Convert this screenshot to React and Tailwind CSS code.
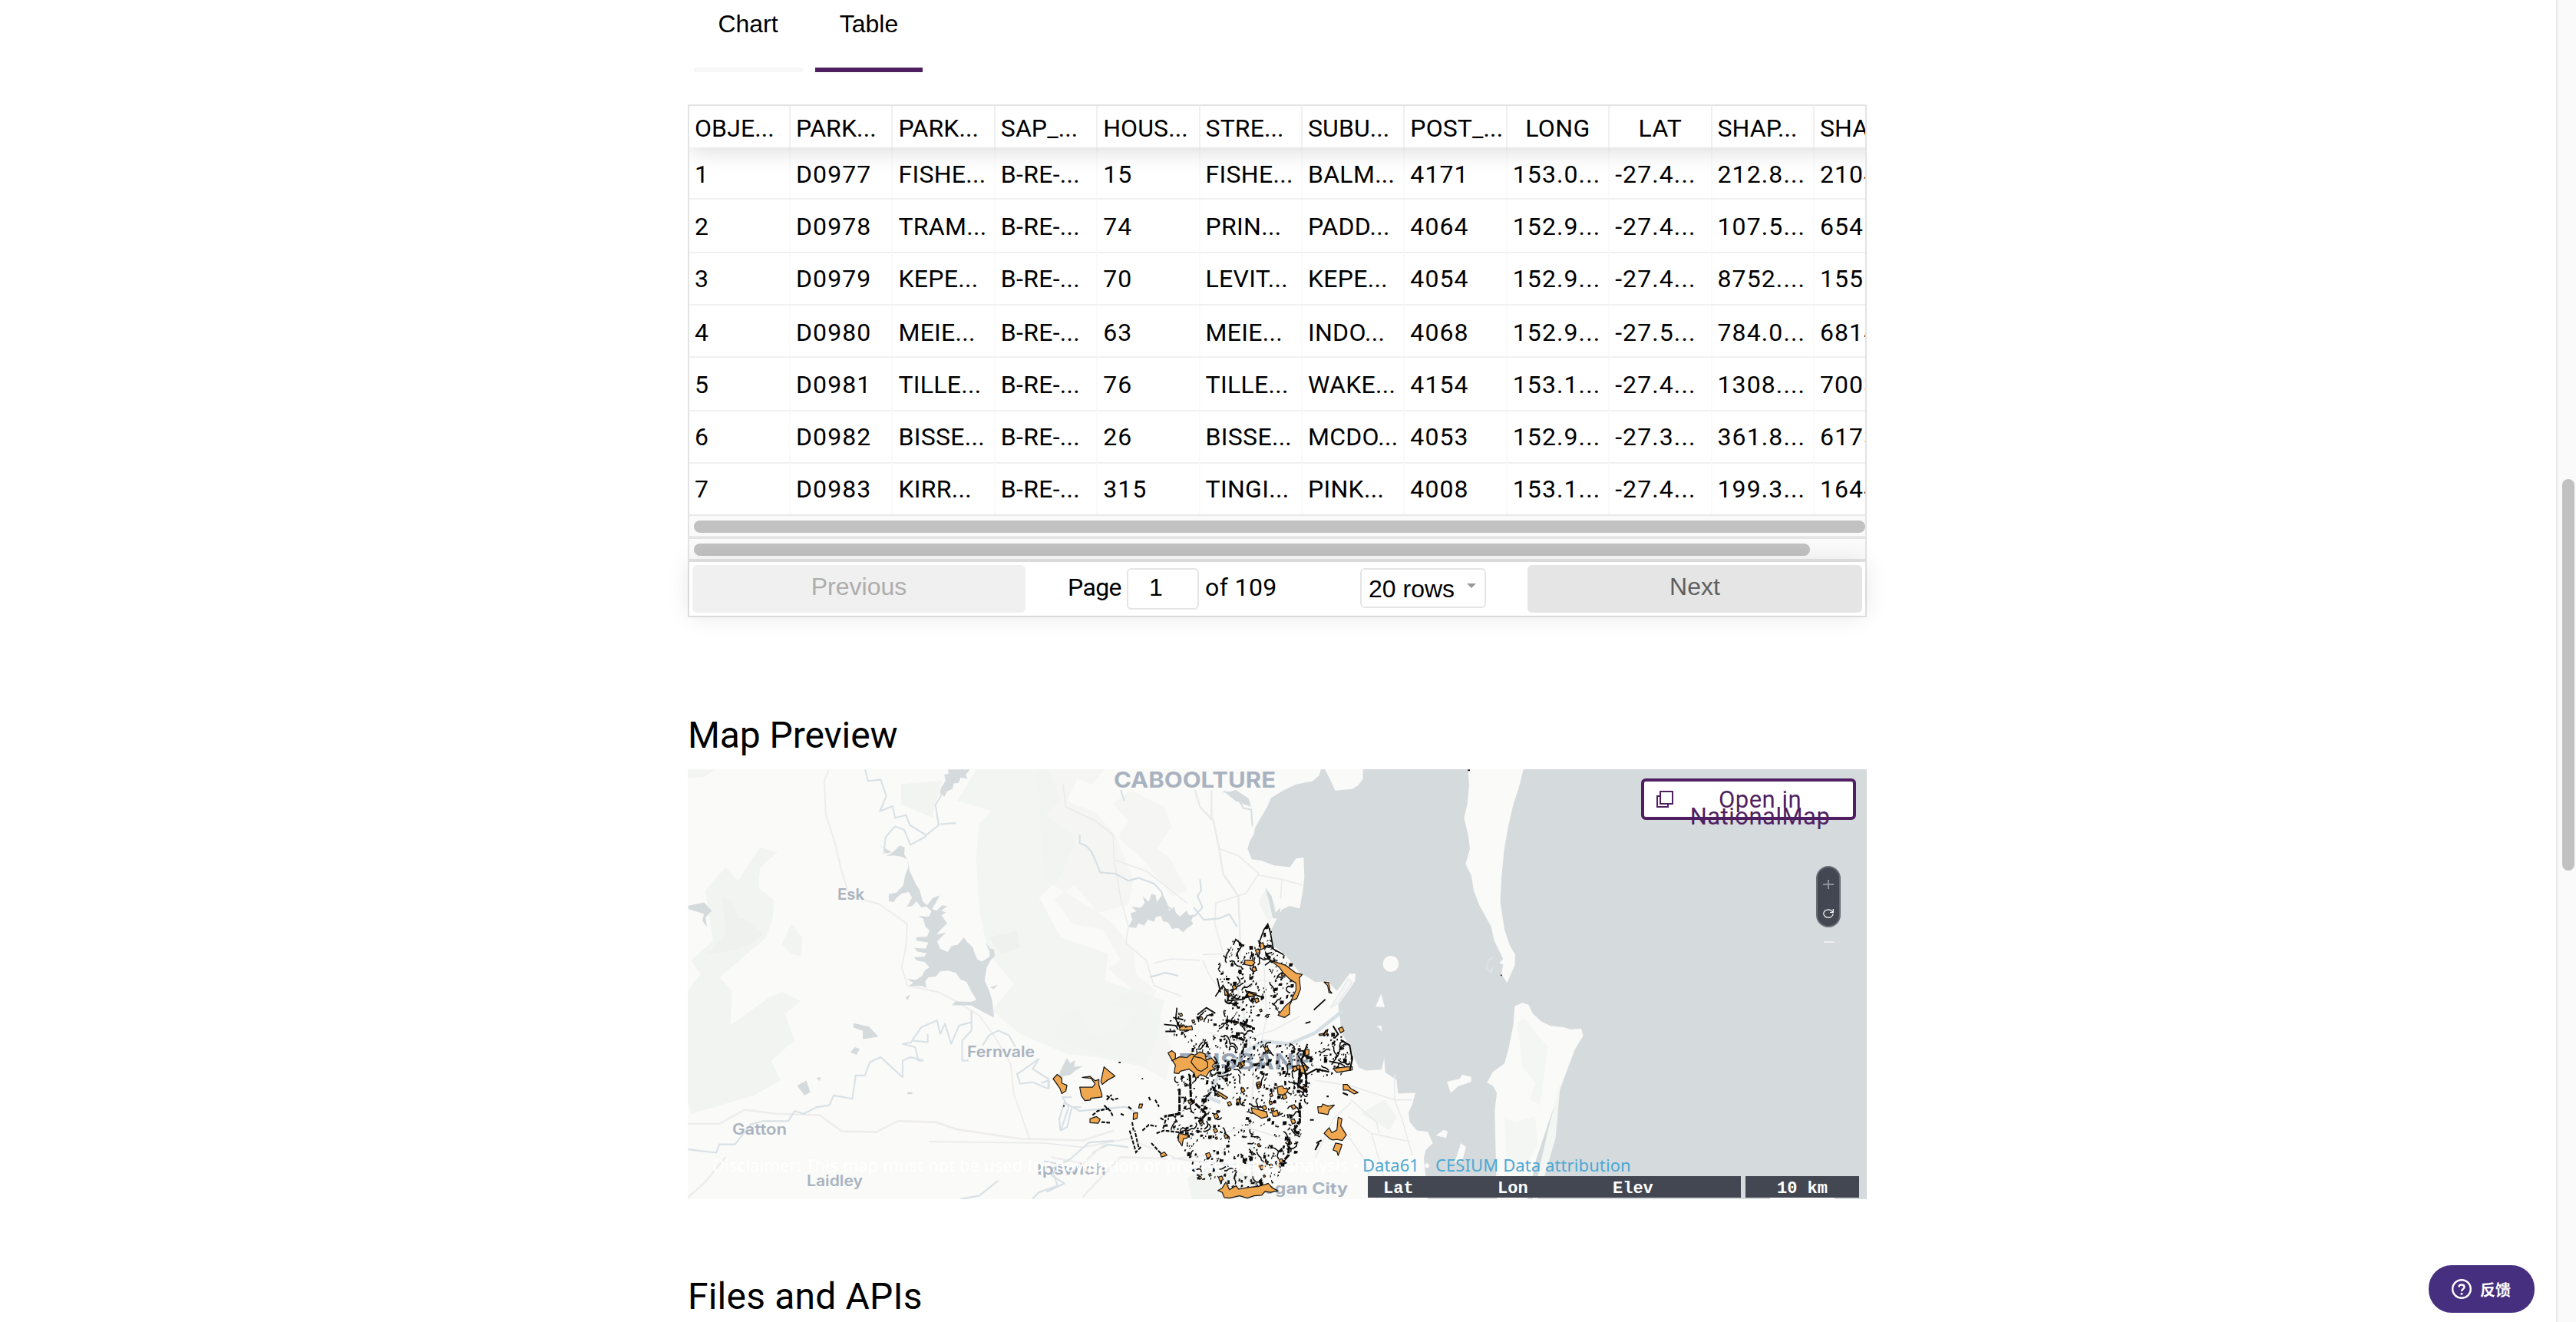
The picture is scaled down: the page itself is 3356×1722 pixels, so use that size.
import React from "react";

const columns = ["OBJE...", "PARK...", "PARK...", "SAP_...", "HOUS...", "STRE...", "SUBU...", "POST_...", "LONG", "LAT", "SHAP...", "SHAPE..."];

const rows = [
  { h: "h-[68px]", pad: "pt-[1px]", cells: ["1", "D0977", "FISHE...", "B-RE-...", "15", "FISHE...", "BALM...", "4171", "153.0...", "-27.4...", "212.8...", "2104..."] },
  { h: "h-[70px]", pad: "pt-[1px]", cells: ["2", "D0978", "TRAM...", "B-RE-...", "74", "PRIN...", "PADD...", "4064", "152.9...", "-27.4...", "107.5...", "654...."] },
  { h: "h-[68px]", pad: "-mt-px", cells: ["3", "D0979", "KEPE...", "B-RE-...", "70", "LEVIT...", "KEPE...", "4054", "152.9...", "-27.4...", "8752....", "1551..."] },
  { h: "h-[68px]", pad: "pt-[1px]", cells: ["4", "D0980", "MEIE...", "B-RE-...", "63", "MEIE...", "INDO...", "4068", "152.9...", "-27.5...", "784.0...", "6814..."] },
  { h: "h-[70px]", pad: "pt-[1px]", cells: ["5", "D0981", "TILLE...", "B-RE-...", "76", "TILLE...", "WAKE...", "4154", "153.1...", "-27.4...", "1308....", "7003..."] },
  { h: "h-[68px]", pad: "-mt-px", cells: ["6", "D0982", "BISSE...", "B-RE-...", "26", "BISSE...", "MCDO...", "4053", "152.9...", "-27.3...", "361.8...", "6173..."] },
  { h: "h-[66px]", pad: "-mt-px", cells: ["7", "D0983", "KIRR...", "B-RE-...", "315", "TINGI...", "PINK...", "4008", "153.1...", "-27.4...", "199.3...", "1644..."] },
];

const grid = "grid w-[1600px] grid-cols-[132px_repeat(11,133.4px)]";

function Tabs() {
  return (
    <div className="flex h-[94px] gap-4 pl-2 font-['Liberation_Sans',sans-serif] text-[32px] leading-[36px] text-black">
      <div className="h-[94px] w-[142px] border-b-[6px] border-[#f7f7f7] pt-[13px] pr-[1px] text-center">Chart</div>
      <div className="h-[94px] w-[140px] border-b-[6px] border-[#4d1f60] pt-[13px] text-center">Table</div>
    </div>
  );
}

function DataTable() {
  return (
    <div className="mt-[42px] h-[668px] border-2 border-[#e3e3e3] text-[32px] leading-[44px] text-black">
      <div className="h-[532px] overflow-hidden">
        <div className={grid + " relative z-10 h-[54px] shadow-[0_4px_30px_rgba(0,0,0,0.15)] bg-white"}>
          {columns.map((c, i) => (
            <div key={i} className="overflow-hidden border-r-2 border-[#f0f0f0] pt-[7px] text-center whitespace-nowrap">
              <span className={c.length < 5 ? "tracking-[0.4px]" : "block pl-[7px] text-left tracking-[0.1px]"}>{c}</span>
            </div>
          ))}
        </div>
        {rows.map((r, i) => (
          <div key={i} className={`${grid} ${r.h} ${i < 6 ? "border-b-2 border-[#f1f1f1]" : ""}`}>
            {r.cells.map((c, j) => (
              <div key={j} className={`overflow-hidden border-r-2 border-[#fafafa] pl-[7px] whitespace-nowrap ${r.pad}`}>
                <span className={/^[-\d.]+$/.test(c) || j === 1 ? "block pt-[12px] tracking-[1.1px]" : "block pt-[12px] tracking-[0.3px]"}>{c}</span>
              </div>
            ))}
          </div>
        ))}
      </div>
      <div className="h-[30px] border-y-2 border-[#e8e8e8] bg-[#fafafa] pt-[6px] pl-[6px]">
        <div className="h-4 w-[1526px] rounded-full bg-[#c1c1c1]" />
      </div>
      <div className="h-[32px] border-t-2 border-b-4 border-[#e4e4e4] bg-[#fafafa] pt-[6px] pl-[6px]">
        <div className="h-4 w-[1454px] rounded-full bg-[#c1c1c1]" />
      </div>
      <div className="flex h-[70px] bg-white px-1 pt-1 font-['Liberation_Sans',sans-serif] shadow-[0_0_30px_rgba(0,0,0,0.1)]">
        <div className="h-[62px] w-[434px] rounded-md bg-[#f0f0f0] pt-[6px] text-center text-[#adadad]">Previous</div>
        <div className="flex w-[654px] pt-1">
          <span className="w-[76px] ml-[55px] font-[Roboto,sans-serif] pt-[3px] tracking-[-0.6px]">Page</span>
          <div className="ml-[1px] h-[54px] w-[94px] rounded-md border-2 border-[#e5e5e5] bg-white pt-[1px] pr-[18px] text-center">1</div>
          <span className="ml-[8px] w-[202px] font-[Roboto,sans-serif] pt-[3px] tracking-[0.4px]">of 109</span>
          <div className="flex h-[52px] w-[164px] items-center rounded-md border-2 border-[#e5e5e5] bg-white pl-[9px]">
            <span className="pt-[2px]">20 rows</span>
            <svg className="mt-[-6px] ml-[16px] h-[6px] w-3" viewBox="0 0 12 6"><path d="M0 0h12L6 6z" fill="#999" /></svg>
          </div>
        </div>
        <div className="h-[62px] w-[436px] rounded-md bg-[#e5e5e5] pt-[6px] text-center text-[#5f5f5f]">Next</div>
      </div>
    </div>
  );
}

/* Parkland marks: seeded scatter inside the council boundary */
const boundary = [[865,560],[885,575],[900,650],[940,672],[1000,740],[995,800],[955,870],[900,890],[815,895],[835,975],[940,985],[1020,990],[1075,1000],[1080,955],[1150,925],[1165,975],[1200,1000],[1210,1080],[1120,1105],[1035,1100],[1030,1200],[1000,1250],[1010,1320],[965,1400],[900,1480],[860,1510],[710,1500],[590,1465],[555,1400],[530,1340],[470,1300],[460,1255],[520,1240],[535,1190],[500,1110],[560,1090],[640,1090],[650,1040],[545,1000],[540,965],[475,940],[480,910],[520,860],[570,910],[620,860],[680,885],[720,850],[672,800],[676,700],[735,615],[840,620]];

/* built-up areas with few parks: cx, cy, rx, ry */
const gaps = [[630,940,38,28],[800,1120,30,18],[745,1240,45,40],[640,1350,50,22],[870,930,40,22],[760,1350,34,30],[735,730,26,22],[860,745,38,22],[870,1310,26,35],[900,1110,30,18],[610,1140,24,26],[560,1250,26,22],[930,1210,26,20],[730,1160,22,20],[850,850,30,16],[800,1440,34,20],[690,1420,24,14],[545,1160,16,20],[1060,1040,20,20],[905,1010,24,14]];

function inside(x, y) {
  for (const [cx, cy, rx, ry] of gaps) {
    if (((x - cx) / rx) ** 2 + ((y - cy) / ry) ** 2 < 1) return false;
  }
  let hit = false;
  for (let i = 0, j = boundary.length - 1; i < boundary.length; j = i++) {
    const [xi, yi] = boundary[i];
    const [xj, yj] = boundary[j];
    if (yi > y !== yj > y && x < ((xj - xi) * (y - yi)) / (yj - yi) + xi) hit = !hit;
  }
  return hit;
}

function makeMarks() {
  let seed = 20117;
  const rnd = () => {
    seed = (seed * 16807) % 2147483647;
    return seed / 2147483647;
  };
  const specks = [];
  const trails = [];
  const blobs = [];
  while (specks.length < 1000) {
    const x = 460 + rnd() * 760;
    const y = 550 + rnd() * 960;
    if (!inside(x, y)) continue;
    const big = rnd();
    const w = big > 0.8 ? 7 + rnd() * 8 : 3 + rnd() * 4;
    const h = big > 0.8 ? 6 + rnd() * 8 : 3 + rnd() * 4;
    specks.push(`M${x.toFixed(0)} ${y.toFixed(0)}l${w.toFixed(0)} ${(rnd() * 4 - 2).toFixed(0)}l${(rnd() * 4 - 3).toFixed(0)} ${h.toFixed(0)}l${(-w).toFixed(0)} ${(rnd() * 3).toFixed(0)}z`);
  }
  while (trails.length < 150) {
    let x = 460 + rnd() * 760;
    let y = 550 + rnd() * 960;
    if (!inside(x, y)) continue;
    let d = `M${x.toFixed(0)} ${y.toFixed(0)}`;
    let a = rnd() * 6.28;
    const n = 3 + Math.floor(rnd() * 5);
    for (let k = 0; k < n; k++) {
      a += rnd() * 1.8 - 0.9;
      const nx = x + Math.cos(a) * 9;
      const ny = y + Math.sin(a) * 9;
      if (!inside(nx, ny)) break;
      x = nx;
      y = ny;
      d += `L${x.toFixed(0)} ${y.toFixed(0)}`;
    }
    trails.push(d);
  }
  while (blobs.length < 60) {
    const x = 460 + rnd() * 760;
    const y = 550 + rnd() * 960;
    if (!inside(x, y)) continue;
    const s = 5 + rnd() * 9;
    blobs.push(`M${x.toFixed(0)} ${y.toFixed(0)}l${s.toFixed(0)} ${(-s / 3).toFixed(0)}l${(s / 2).toFixed(0)} ${s.toFixed(0)}l${(-s).toFixed(0)} ${(s / 2).toFixed(0)}z`);
  }
  return { specks: specks.join(""), trails: trails.join(""), blobs: blobs.join("") };
}

const marks = makeMarks();

function MapArt() {
  return (
    <svg className="block h-[560px] w-[1536px]" viewBox="896 1002 1536 560">
      <rect x="896" y="1002" width="1536" height="560" fill="#d5dadd" />
      {/* mainland and eastern section */}
      <g transform="translate(1360 1000) scale(.33333 .3635)">
        <path fill="#fafaf8" d="M-1400 0H1085L1075 28 1050 48 985 60 935 82 888 108 870 145 842 188 825 215 820 240 805 262 796 290 812 328 850 333 900 350 962 356 985 325 1015 322 1018 390 1012 440 1000 505 960 495 930 508 905 550 885 588 900 640 940 668 1000 735 1040 755 1060 768 1110 765 1145 800 1195 738 1218 738 1216 765 1150 850 1158 905 1162 950 1198 1000 1215 1045 1232 1075 1260 1085 1320 1082 1330 1040 1334 1092 1378 1118 1384 1168 1452 1165 1440 1205 1425 1235 1430 1270 1458 1300 1500 1305 1520 1345 1492 1370 1485 1400 1500 1546H-1400z" />
        <path fill="#fafaf8" d="M1095 0H1247V40L1230 62 1205 76 1138 82 1120 45zM980 0H1083L1060 40 1000 45z" />
        <g fill="#f2f4f2">
          <path d="M-30 0H240L190 60 130 40 90 120 200 160 280 240 350 400 330 490 210 520 120 420 40 470 110 560 230 580 300 690 250 720 340 790 260 850 360 870 310 940 190 960 130 860 60 900 30 960 150 1010 360 1060 480 1120 500 1010 470 910 400 860 440 800 360 740 350 650 270 560 200 510 0 400z" opacity=".6" />
          <path d="M340 80L470 140 500 210 440 290 490 320 560 440 500 460 400 340 290 250 330 190 270 130z" opacity=".6" />
          <path d="M1240 1240l90-50 50 60-30 50zM870 430l40 70-30 60-40-80zM560 1470l120-60 160 70 50 66H580z" />
        </g>
        <g fill="none" stroke="#e9eaec" strokeWidth="4.500">
          <path d="M590 80L610 140 655 185 655 80M660 180L685 290 700 380 760 460 768 640 760 800 800 960 820 1100 805 1300 820 1546" strokeWidth="7" />
          <path d="M685 290L760 315 840 380 790 450 672 485 668 560 700 660M840 385L930 400 925 470M930 400L1010 420M75 60L85 140 200 190 270 240 275 330 400 370 560 485M275 330L300 470 330 570 320 630 400 690 430 780 540 820M430 700L500 685 610 690M620 670L760 665M620 690L650 750 720 830M780 780L860 760 930 780M860 700L870 900 850 980" />
          <path d="M-450 1340L0 1345 150 1360 330 1330 520 1400 700 1380M1060 1120L1200 1140 1370 1190 1440 1190M1200 1190L1300 1270 1310 1310M1200 1200L1130 1260 1060 1400M1370 1100V1190L1400 1260 1440 1390M1190 1250L1280 1310 1430 1340M1280 1310L1340 1500M1160 1280L1250 1400 1300 1546M640 950L760 980 900 940 1000 890M680 1310L800 1290 1000 1350M500 1400L700 1420 1000 1420" />
        </g>
        <g fill="none" stroke="#d5dfe4" strokeWidth="6" strokeLinejoin="round">
          <path d="M140 240v30l25 10 20 20 20 40 15 35 60 5 50 25 40-10 60 20 30 30 10 40 60 50 60-5 30-30-20-40 15-20-5-40M585 500l40 45 60-5 40-15 30 45M700 85l50 10 30 50 30 5 5 60M300 80l15 40M415 750l60-15 50 10" />
          <path d="M1170 870L1060 950 960 990 860 980 800 1010 740 1060 680 1110 640 1180 690 1200" strokeWidth="13" />
          <path d="M-10 1130l30-10 0 30M65 1300l-5-40 20-60 60 30 180-15 40 20M190 1380l60-30 80 10M0 1410l60 10-30 40 50 30-70 30" />
        </g>
        <g fill="#d5dadd">
          <path d="M330 570l16-26-8-22 24-8-20-16 38 4 14-18-8-24 24 20 10-28 16 4 6 26 22-30 18 34 8 28 18-16 10 28 14 8 26-22 10 20 18-4-10 20 8 12-26 16-14 14-20-16-24 4-14-24-20-4-10-20-20 6-6 16-24-8-14 22-22-8-10 16z" />
          <path d="M865 430l25 30 15 60 20-20-5 40-25 0-15-60zM710 90l40-10 50 30 10 30-60-20zM90 1040l20 30 20 10-35 20-40 15 10-30z" />
        </g>
        <path fill="#f4f4f2" stroke="#e3e6e8" strokeWidth="3" d="M1190 755L1120 860 1148 845 1205 770z" />
      </g>
      {/* western section */}
      <g transform="translate(880 900) scale(.40816 .43368)">
        <g fill="#f2f4f2">
          <path d="M160 530L200 570 240 510 270 470 325 485 270 530 265 590 315 630 310 680 290 740 215 800 140 860 180 900 175 1005 300 920 340 905 400 930 350 970 380 1050 305 1110 335 1170 250 1215 50 1270 39 1230V900L80 850 50 810 120 750 95 600z" />
          <path d="M340 760L370 700 405 740 400 795 370 790zM39 236H130L90 258 39 262zM720 280L850 270 820 380 720 340z" />
          <path d="M960 236H1190L1230 330 1180 370 1280 440 1230 560 1160 620 1230 740 1380 790 1370 870 1560 930 1530 1060 1500 1130 1350 1100 1250 1090 1100 1030 1010 960 1080 880 1000 790 970 660 960 500 970 400 1010 360 900 330z" opacity=".9" />
        </g>
        <path fill="#edf0ee" d="M150 620l30 10 20 50 30 10 50 40-40 30-60 20-80 10 60-60zM1000 740l90-20 10 50-60 20z" opacity=".8" />
        <g fill="none" stroke="#eeecec" strokeWidth="4.500" strokeLinejoin="round">
          <path d="M490 236L475 270 480 370 510 460 530 540 550 600 590 625 650 640 740 700 735 770 722 830 740 885 840 905 900 935 970 975 1020 1040 1070 1120 1080 1210 1130 1345" />
          <path d="M39 1300H140L220 1258 320 1270 460 1274 530 1322 640 1325 710 1292 830 1295 900 1317 1100 1345 1300 1350 1400 1320M39 1522L90 1480 160 1400M1300 1520L1420 1400 1568 1405M1200 1400L1300 1420 1370 1360" strokeWidth="6" />
        </g>
        <g fill="none" stroke="#d9e1e6" strokeWidth="5" strokeLinejoin="round">
          <path d="M605 236l10 35 40-5 18 50-20 45 40-15 8 35 35-8 12 30 52 30 40-30-10-60 50-80M845 400l50-3M665 490l5-50 30-33 30 10 20 45 50-25M945 960v60l-30 30 0 60 20 0M945 995l-40 10-25 55-20-60-15 30-10-40-50 20-30 40 50 5 0-25M755 1055l-30 5 40 10 10 40 15 0-40-10-25 10 0 50-70-60-35 15-15 40-30 0-10 70-60-10-15 30-40 5-40 20-30-8-20 30-80 0-40 10-50 60-50 0-10 25-90-10M980 1065l20-30 30-15 35 15 20 35M1090 1150l10-5 60-40-20 30 50 30 0 30-50-20-40 5zM1265 1220l-30 0 20 30-25 70 20-10 15-60 30 0M910 1526l60-10 60-45M1140 1526l20-20 60-20-20-50 60-30 60-50 80-5" />
        </g>
        <g fill="#d5dadd">
          <path d="M870 236h70l-14 16 6 12-22-4-6 16-16 2-4 16-18 8-8 16-10-12-6 6 6-22 14-20-4-18 14-4z" />
          <path d="M645 460l22 14 3 14 24-4 22-20 16 6-2 20 12 20 5 30 20 40 12 18 10 34 14 12 18-22 22-8-12 22-12 18 14 6 18-16 16 2-18 14 14 6-14 8 18 24-20 18-14 16 30-6-28 26 10 22 24 10 12-18 20-4 20-22 10 14 18 16 6 18 10 20 14 4 24-14 0-16-14-26 16 18 12 2 2 20-14 14-12 22-6 38 14 30 10 30 6 52-44-22-30-16-60 0 10-12 50 2 18-6-16-24-16-30-20-8-14-20-28-6-22 2-14 16-24 2-10 12 4 20-14-6-42 0 14-10-22-12 30 4 20-12 10-18 14-8-16-16-24-4-10-10 34-2 6-10-30-6-8-10 36 2 8-18-38-6 0-10 34-2 8-18-14-14-6-22-16-8 34 2 8-16-16-14-16 2-16-18-14 14-16 2 16-28-10-16-22 4-18 14-8 12-16-2 0-22 24-4 22-22 6-30 10-24-2-24-18-8-26-4-26 2 22-10z" />
          <path d="M568 998l50 10 30 30-50 8 0-25-30-10zM558 1085l15-15 15 5-10 18zM388 1185l30-15 12 35-18 10zM41 655l0-10 50-10 25 25-20 20 5 30-15-20 5-20zM735 920l15-8-10 18zM740 1205h16v6h-16zM1005 890l25-8-15 14zM450 1162l14-2-4 12z" />
          <path d="M1245 1155l14-16 2-22 14-8-2 20 28-2-26 14-14 12z" />
        </g>
      </g>
      {/* bay islands */}
      <g transform="translate(1700 1000) scale(.33333 .3635)">
        <g fill="#fafaf8">
          <path d="M637 0H856L835 75 815 130 795 210 778 300 768 400 764 480 780 580 800 635 822 670 820 710 790 770 768 740 775 705 760 700 775 685 740 620 728 570 680 490 660 440 650 385 628 345 645 290 638 240 622 180 635 130 642 60z" />
          <path d="M820 855L850 842 875 850 890 880 925 910 960 925 1010 930 1040 938 1080 935 1088 960 1055 1010 1010 1120 960 1250 905 1400 870 1546H750L745 1350 742 1230 750 1165 735 1140 712 1128 735 1090 780 1060 795 1010 815 920z" />
          <ellipse cx="336" cy="703" rx="31" ry="29" />
          <path d="M298 810l14 48-36-2zM280 925l18 0 5 20zM512 1318l30-20 16 5-6 24zM610 1345l20 15-15 50-30 5zM555 1125l50-10 10-15 35 8 0 18-50 15-30 25z" />
        </g>
        <path fill="#f4f6f4" d="M830 910l30-10 50 60 40 40-10 60-20 150-40-20 20-60-50-60zM780 1250l40 20 80-20 10 100-60 100-60-20zM1000 1120l-50 180-60 246h20l70-220z" />
        <g fill="none" stroke="#e1e5e6" strokeWidth="4"><path d="M735 680l-18 10-8 30 20 15 5-20" /></g>
      </g>
      {/* place names */}
      <g fontFamily="Inter, 'Open Sans', sans-serif" fontWeight="600" fill="#a9b3c0" fontSize="19.5">
        <text x="1451" y="1026" fontSize="28" fontWeight="700" textLength="211" lengthAdjust="spacingAndGlyphs">CABOOLTURE</text>
        <text x="1091" y="1172" textLength="35" lengthAdjust="spacingAndGlyphs">Esk</text>
        <text x="1260" y="1377" textLength="88" lengthAdjust="spacingAndGlyphs">Fernvale</text>
        <text x="954" y="1478" textLength="71" lengthAdjust="spacingAndGlyphs">Gatton</text>
        <text x="1051" y="1545" textLength="73" lengthAdjust="spacingAndGlyphs">Laidley</text>
        <text x="1351" y="1530" textLength="90" lengthAdjust="spacingAndGlyphs">Ipswich</text>
        <text x="1535" y="1393" fontSize="29" fontWeight="700" fill="#98a4b4" textLength="172" lengthAdjust="spacingAndGlyphs">BRISBANE</text>
        <text x="1633" y="1555" fontWeight="700" textLength="123" lengthAdjust="spacingAndGlyphs">Logan City</text>
      </g>
      {/* parks */}
      <g transform="translate(1360 1000) scale(.33333 .3635)">
        <path d={marks.specks} fill="#0c0c0c" />
        <path d={marks.trails} fill="none" stroke="#0c0c0c" strokeWidth="4.500" />
        <g fill="#f0a850" stroke="#151515" strokeWidth="3.500" strokeLinejoin="round">
          <path d={marks.blobs} />
          <path d="M36 1115l16-16 18 14 0 17 20 8-4 20-16 10-8-20-14-18zM140 1145l50 0 10-12-15-20-35-3 30-4 20 16 15-5 0 20 12 35 0 8-45 5 0 6-22 2-14-18zM235 1072l43 33-30 15-20 15-5-10zM180 1258l25-8 15 10-8 14-32-2zM350 1238l16-2-2 20-15 5zM374 1205l12 0-4 14-12 0zM455 1385l16-8 10 12-22 6z" />
          <path d="M485 1022l15-8 14 10 0 20-14 6 30-14 30 2 16-12 14 4 20-12 20 8 4 22 20-8 16 16-12 14 10 10-20 6-15 22-20-8-20 14-6-20-20-14-34 8-6 8-18-2 5-28-16-22z" />
          <path d="M575 1055l10-20 30 5 25 15 0 18-25 15-15-5z" />
          <path d="M885 690l60 18 40 28 25 5-12 12 5 40-15 35-18 5-10 20 0 30-20 12-25-8 30-35 20-15 20-40 0-25-25-15-25-22-15-20zM785 690l30 0 10 8-12 12-28-5zM845 630l12-3 5 20-15 5zM790 800l40 8 0 8-30 4zM705 795l15 0 0 20-12 0zM530 922l18 0 5 8 25-5 3 14-50 2z" />
          <path d="M912 1145l20-5 5 8 18 3-5 12-15 10-20-3zM810 1218l60 15 5 18-25 5-35-20zM890 1235l22-8 5 20-20 3zM528 1310l22 5 15 0-5 12-15 3-5 25-15-20zM680 1160l38 22-8 6-30-18zM1018 1135l12 25-16 2zM1000 1070l20-4 10 14-16 16-12-6zM1020 1010l16 0 0 18-14 4z" />
          <path d="M680 1515l16-8 15-22 14 27 26-14 10 12 40-6 40-4 36-10 16 16 22 10-30 6-20-4-14 14-30 2-26 8-30-8-40 8-20-2-8-18z" />
          <path d="M1070 1215l15 0 5-10 20 8 25-4-20 18-5 16-22-4-15-2zM1095 1310l20-20 10 18 20-10 5-45 15 5-5 25 10 15 12 18-16 20-20-4-18 2-10-4zM1140 1345l25 5-5 15-10 25-5-15-15-5zM1170 1135l15 0 15 15 28 14-15 5-25-14-18 0zM1095 768l18 2 5 30 8 8-12-2-5-25zM1075 955l20-3 15-15-5 20-28 3zM1130 1078l40-5 35-2 0 12-30 5-30 4z" />
        </g>
        <g fill="none" stroke="#0c0c0c" strokeWidth="5">
          <path d="M1055 868l45-38M1022 916l20-6M470 920l45 4 10 15M475 945l40 0M520 860l-5 40 15 30 15-5M505 895l40 8M600 885l35-25 35 20M740 635l10-20 25 20-20 30 5 20M840 630l20-50 15-20 10 30 12 60 40 20M690 805l-12-50M670 820l30-40 20 30 0 25 60-5 20-25 60 20" />
          <path d="M245 1175l25 15 20-5M245 1190l20-18M190 1245l20-15 50-10M225 1270l35 2M235 1210l25 20 10 20M300 1240l12 5M330 1215l12 8M335 1300l25 78 20-20M345 1270l5 30M370 1360l-15-60M385 1300l25-20 30 5M420 1345l40 40M440 1310l30-10 90 10 30 5M455 1255l20 10-10 30M410 1180l6 12M435 1190l15 25" strokeWidth="6" strokeDasharray="14 5" />
          <path d="M530 1150v90l-60 10M570 1100l5 90 60 50-30 30M1000 1080l-5 60 30 20 0-60M1000 1200v70l-25 30 30 15M960 1330l-5 60-20 20M710 905l60 10 40 15M735 960l60 20" strokeWidth="9" strokeDasharray="24 4" />
          <path d="M1130 925l20 30-15 15M1160 975l35 20 10 50-10 40M1105 940l-15 20M1030 990l-25 60 20 50 40-20 50 10M1060 1370l15-25M1065 1345l20-10M1168 1165l20 8M1105 1178h8M1040 1262h15" strokeWidth="6" />
          <path d="M292 1056h8M75 1212h6M385 1112v5M1657 9h8M1785 744h5" />
        </g>
      </g>
    </svg>
  );
}

function MapPreview() {
  return (
    <div className="relative h-[560px] w-[1536px] overflow-hidden">
      <MapArt />
      <div className="absolute top-[12px] right-[14px] flex h-[54px] w-[280px] rounded-md border-4 border-[#4f1f61] bg-white text-[#4f1f61]">
        <svg className="mt-[12px] ml-[16px] h-[22px] w-[22px] shrink-0" viewBox="0 0 22 22" fill="none" stroke="currentColor" strokeWidth="2">
          <path d="M5 1h16v16H5zM5 7H1v14h14v-4" />
        </svg>
        <div className="mt-[13px] ml-[15px] w-[196px] text-center text-[31px] leading-[22px] tracking-[0.5px]">Open in NationalMap</div>
      </div>
      <div className="absolute top-[126px] right-[34px] flex h-[80px] w-8 flex-col items-center rounded-full border-2 border-[#686d76] bg-[#424752]">
        <svg className="mt-[16px] h-3 w-[14px] shrink-0" viewBox="0 0 14 12" stroke="#8e929a" strokeWidth="2"><path d="M0 6h14M7 0v12" /></svg>
        <svg className="mt-[26px] h-3 w-[14px] shrink-0" viewBox="0 0 14 12" fill="none" stroke="#fff" strokeWidth="1.200"><path d="M13.300 0v4.500H9M13 4.500C11.500 2 9.500.8 7 .8 3.500.8.800 3 .800 6s2.700 5.200 6.200 5.200c3.500 0 6-2.200 6.200-5.200" /></svg>
        <div className="mt-[26px] ml-px h-[2px] w-[14px] shrink-0 translate-y-[4px] bg-[#eeeef2]" />
      </div>
      <div className="absolute top-[500px] left-[32px] flex font-['Noto_Sans',sans-serif] text-[22px] leading-[30px] whitespace-nowrap text-white">
        <span className="w-[847px] tracking-[0.1px]">Disclaimer: This map must not be used for navigation or precise spatial analysis •</span>
        <span className="w-[80px] text-[#4ba8d3]">Data61</span>
        <span className="w-[15px]">•</span>
        <span className="tracking-[0.1px] text-[#4ba8d3]">CESIUM Data attribution</span>
      </div>
      <div className="absolute top-[530px] left-[886px] flex h-[28px] gap-[6px] font-['Liberation_Mono',monospace] text-[22px] leading-[34px] font-bold text-white">
        <div className="flex w-[486px] bg-[#424752] pl-[20px]">
          <span className="w-[149px]">Lat</span>
          <span className="w-[150px]">Lon</span>
          <span>Elev</span>
        </div>
        <div className="w-[148px] bg-[#424752] text-center">10 km</div>
      </div>
      <div className="absolute bottom-0 left-[1410px] h-[2px] w-[84px] bg-white" />
    </div>
  );
}

export default function App() {
  return (
    <div className="flex h-[1722px] w-full overflow-hidden bg-white font-[Roboto,sans-serif] text-black">
      <main className="ml-[896px] w-[1536px] shrink-0">
        <Tabs />
        <DataTable />
        <h2 className="mt-[120px] h-[78px] pt-[6px] text-[48px] leading-[56px] tracking-[-0.1px]">Map Preview</h2>
        <MapPreview />
        <h2 className="mt-[99px] text-[48px] leading-[56px] whitespace-nowrap tracking-[0.2px]">Files and APIs</h2>
      </main>
      <div className="ml-auto h-full w-[26px] shrink-0 border-l-2 border-[#e8e8e8] bg-[#fafafa] pt-[624px] pl-[6px]">
        <div className="h-[510px] w-4 rounded-full bg-[#c1c1c1]" />
      </div>
      <div className="absolute top-[1648px] left-[3164px] flex h-[62px] w-[138px] items-center rounded-[30px] bg-[#472f80] pl-[30px] text-white">
        <svg className="h-[26px] w-[26px]" viewBox="0 0 26 26" fill="none" stroke="currentColor" strokeWidth="2.400">
          <circle cx="13" cy="13" r="11.800" />
          <path d="M9.500 10.500C9.500 8.500 11 7.500 13 7.500s3.500 1.200 3.500 3c0 2.500-3.500 2.500-3.500 5.500" />
          <circle cx="13" cy="19.300" r="1.500" fill="currentColor" stroke="none" />
        </svg>
        <span className="ml-[11px] pt-[2px] font-['Noto_Sans_CJK_SC',sans-serif] text-[20px] leading-[28px] font-bold">反馈</span>
      </div>
    </div>
  );
}
